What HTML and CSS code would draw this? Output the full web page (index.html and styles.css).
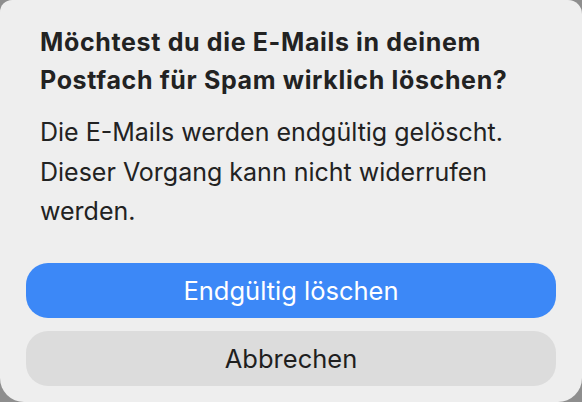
FILE: index.html
```html
<!DOCTYPE html>
<html lang="de">
<head>
<meta charset="utf-8">
<link rel="stylesheet" href="styles.css">
</head>
<body>
<div class="dialog">
  <div class="content">
    <h1 class="title">Möchtest du die E-Mails in deinem Postfach für Spam wirklich löschen?</h1>
    <p class="message">Die E-Mails werden endgültig gelöscht. Dieser Vorgang kann nicht widerrufen werden.</p>
  </div>
  <div class="actions">
    <button class="btn btn-primary">Endgültig löschen</button>
    <button class="btn btn-secondary">Abbrechen</button>
  </div>
</div>
</body>
</html>
```
FILE: styles.css
```css
html, body {
  margin: 0;
  padding: 0;
  width: 582px;
  height: 402px;
  overflow: hidden;
  background: #8e8e8e;
}
.dialog {
  box-sizing: border-box;
  width: 582px;
  height: 402px;
  background: #eeeeee;
  border-radius: 12px 14px 24px 24px;
  font-family: Inter, "Noto Sans", sans-serif;
  color: #222222;
  display: flex;
  flex-direction: column;
  padding: 23px 26px 0 26px;
}
.content {
  padding: 0 14px;
}
.title {
  margin: 0;
  font-size: 25px;
  font-weight: 700;
  line-height: 38px;
  letter-spacing: 0.65px;
}
.message {
  margin: 14px 0 0 0;
  font-size: 25px;
  font-weight: 400;
  line-height: 39.5px;
}
.actions {
  margin-top: 31px;
  display: flex;
  flex-direction: column;
  gap: 13px;
}
.btn {
  height: 55px;
  border: none;
  border-radius: 22px;
  font-family: Inter, "Noto Sans", sans-serif;
  font-size: 25.5px;
  padding: 0;
  width: 100%;
}
.btn-primary {
  background: #3c88f7;
  color: #ffffff;
}
.btn-secondary {
  background: #dcdcdc;
  color: #1f1f1f;
}
```
